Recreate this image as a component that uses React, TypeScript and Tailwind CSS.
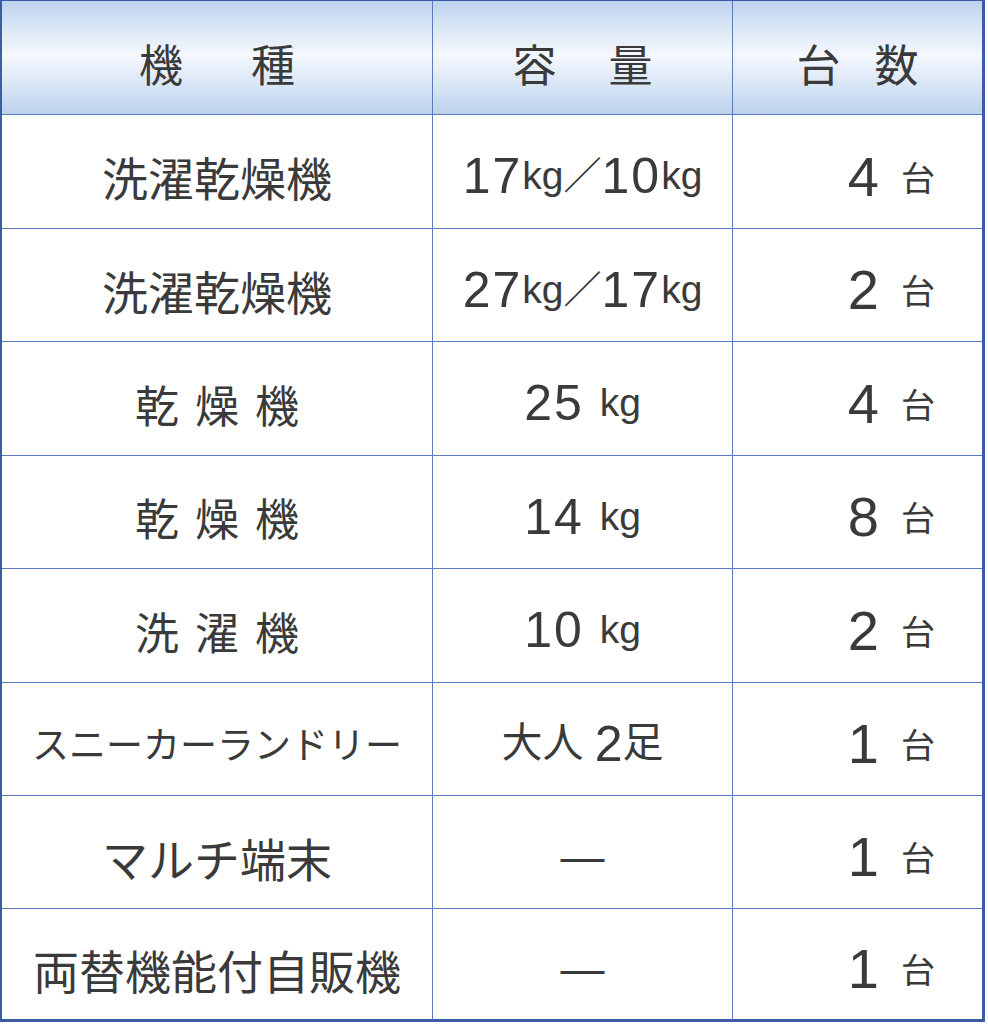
const rows: { name: string; nameClass: string; cap: React.ReactNode; count: string; h: string }[] = [
  {
    name: "洗濯乾燥機",
    nameClass: "text-[46px]",
    cap: (
      <>
        <span className="text-[50px] tracking-[2px]">17</span>
        <span className="text-[39px]">kg</span>
        <span className="text-[38px]">／</span>
        <span className="text-[50px] tracking-[2px]">10</span>
        <span className="text-[39px]">kg</span>
      </>
    ),
    count: "4",
    h: "h-[114px]",
  },
  {
    name: "洗濯乾燥機",
    nameClass: "text-[46px]",
    cap: (
      <>
        <span className="text-[50px] tracking-[2px]">27</span>
        <span className="text-[39px]">kg</span>
        <span className="text-[38px]">／</span>
        <span className="text-[50px] tracking-[2px]">17</span>
        <span className="text-[39px]">kg</span>
      </>
    ),
    count: "2",
    h: "h-[113px]",
  },
  {
    name: "乾燥機",
    nameClass: "text-[44px] tracking-[16px] pl-[16px]",
    cap: (
      <>
        <span className="text-[50px] tracking-[2px]">25 </span>
        <span className="text-[39px]">kg</span>
      </>
    ),
    count: "4",
    h: "h-[114px]",
  },
  {
    name: "乾燥機",
    nameClass: "text-[44px] tracking-[16px] pl-[16px]",
    cap: (
      <>
        <span className="text-[50px] tracking-[2px]">14 </span>
        <span className="text-[39px]">kg</span>
      </>
    ),
    count: "8",
    h: "h-[113px]",
  },
  {
    name: "洗濯機",
    nameClass: "text-[44px] tracking-[16px] pl-[16px]",
    cap: (
      <>
        <span className="text-[50px] tracking-[2px]">10 </span>
        <span className="text-[39px]">kg</span>
      </>
    ),
    count: "2",
    h: "h-[114px]",
  },
  {
    name: "スニーカーランドリー",
    nameClass: "text-[37px]",
    cap: (
      <>
        <span className="text-[41px]">大人 </span>
        <span className="text-[50px]">2</span>
        <span className="text-[41px]">足</span>
      </>
    ),
    count: "1",
    h: "h-[113px]",
  },
  {
    name: "マルチ端末",
    nameClass: "text-[46px]",
    cap: <span className="text-[44px]">—</span>,
    count: "1",
    h: "h-[113px]",
  },
  {
    name: "両替機能付自販機",
    nameClass: "text-[46px]",
    cap: <span className="text-[44px]">—</span>,
    count: "1",
    h: "h-[110px]",
  },
];

const font = { fontFamily: '"Liberation Sans", "Noto Sans CJK JP", sans-serif' };
const cjk = { fontFamily: '"Noto Sans CJK JP", sans-serif' };

export default function App() {
  return (
    <div className="w-[988px] h-[1024px] bg-white" style={font}>
      <div className="w-[985px] border-l-2 border-t border-r-[3px] border-b-[3px] border-[#3d5ca6] text-[#3a3a3a]">
        <div
          className="flex h-[114px] border-b border-[#5a7bbf] bg-[linear-gradient(to_bottom,#bed3ee_0%,#dbe7f6_25%,#f5f8fd_48%,#d8e5f5_75%,#bcd1ec_100%)]"
          style={cjk}
        >
          <div className="w-[431px] border-r border-[#5a7bbf] flex items-center justify-center pt-[10px] text-[44px]">
            <span>機</span>
            <span className="ml-[68px]">種</span>
          </div>
          <div className="w-[300px] border-r border-[#5a7bbf] flex items-center justify-center pt-[10px] text-[44px]">
            <span>容</span>
            <span className="ml-[52px]">量</span>
          </div>
          <div className="flex-1 flex items-center justify-center pt-[10px] text-[44px]">
            <span>台</span>
            <span className="ml-[34px]">数</span>
          </div>
        </div>
        {rows.map((r, i) => (
          <div
            key={i}
            className={`flex ${r.h} ${i < rows.length - 1 ? "border-b border-[#5a7bbf]" : ""}`}
          >
            <div className="w-[431px] border-r border-[#5a7bbf] flex items-center justify-center pt-[10px]">
              <span className={`whitespace-nowrap ${r.nameClass}`} style={cjk}>
                {r.name}
              </span>
            </div>
            <div className="w-[300px] border-r border-[#5a7bbf] flex items-center justify-center pt-[10px] whitespace-pre">
              {r.cap}
            </div>
            <div className="flex-1 flex items-center justify-end pr-[47px] pt-[10px] gap-[22px]">
              <span className="text-[56px] leading-none">{r.count}</span>
              <span className="text-[34px] leading-none" style={cjk}>
                台
              </span>
            </div>
          </div>
        ))}
      </div>
    </div>
  );
}
